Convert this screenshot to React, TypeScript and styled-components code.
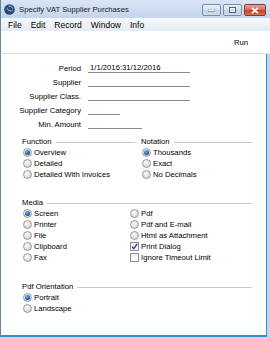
import React from 'react'
import styled, { createGlobalStyle } from 'styled-components'

const GlobalStyle = createGlobalStyle`
  html, body {
    margin: 0;
    padding: 0;
    background: #ffffff;
  }
  body {
    font-family: 'Liberation Sans', Arial, sans-serif;
    color: #000;
  }
`

const Window = styled.div`
  width: 270px;
  height: 337px;
  display: flex;
  flex-direction: column;
  box-sizing: border-box;
  overflow: hidden;
  background: #c4d6ec;
`

const TitleBar = styled.div`
  height: 18px;
  display: flex;
  align-items: center;
  padding-left: 3px;
  background: linear-gradient(#d8e5f4, #c3d5ec);
  border-left: 1px solid #6f8197;
`

const TitleText = styled.span`
  font-size: 7.7px;
  margin-left: 4px;
  color: #1b1b1b;
`

const Controls = styled.div`
  margin-left: auto;
  align-self: flex-start;
  margin-top: 4px;
  margin-right: 4px;
  display: flex;
  gap: 2px;
`

const CtlButton = styled.div<{ close?: boolean; wide?: number }>`
  width: ${p => p.wide}px;
  height: 12px;
  box-sizing: border-box;
  border: 1px solid ${p => (p.close ? '#8a3a2e' : '#7b8ea8')};
  border-radius: 2px;
  background: ${p =>
    p.close
      ? 'linear-gradient(#e9a593, #d46a52 50%, #c2412b 51%, #d86a4f)'
      : 'linear-gradient(#e8eef7, #d3dfee 50%, #c2d2e7 51%, #cfdcee)'};
  display: flex;
  align-items: center;
  justify-content: center;
`

const MenuBar = styled.div`
  height: 13px;
  display: flex;
  align-items: center;
  gap: 9px;
  padding-left: 7px;
  font-size: 8.5px;
  background: linear-gradient(#f7f9fc, #e4ebf4);
  border-left: 1px solid #6f8197;
`

const Toolbar = styled.div`
  height: 22px;
  display: flex;
  align-items: center;
  justify-content: flex-end;
  padding-right: 22px;
  font-size: 7.7px;
  background: #ffffff;
  border-left: 1px solid #6f8197;
  border-bottom: 1px solid #dcdcdc;
`

const Content = styled.div`
  flex: 1;
  background: #ffffff;
  border-left: 1px solid #6f8197;
  border-right: 1px solid #3b8fd3;
  border-bottom: 2px solid #2c8fd8;
  margin-right: 3px;
  font-size: 7.7px;
`

const Fields = styled.div`
  display: grid;
  grid-template-columns: 80px 1fr;
  column-gap: 7px;
  grid-auto-rows: 14px;
  align-items: center;
  padding-top: 7px;
`

const Label = styled.span`
  text-align: right;
  white-space: nowrap;
`

const Field = styled.div<{ w: number }>`
  width: ${p => p.w}px;
  height: 10px;
  line-height: 9px;
  padding-left: 2px;
  box-sizing: border-box;
  border-bottom: 1px solid #8a8a8a;
  white-space: nowrap;
`

const Body = styled.div`
  padding: 0 14px 0 21px;
`

const Columns = styled.div`
  display: grid;
  grid-template-columns: 113px 1fr;
  column-gap: 6px;
  margin-top: 5px;
`

const Section = styled.div<{ gapTop?: number }>`
  margin-top: ${p => p.gapTop || 0}px;
`

const Header = styled.div`
  height: 11px;
  display: flex;
  align-items: center;
  white-space: nowrap;
`

const Rule = styled.span`
  flex: 1;
  height: 0;
  border-top: 1px solid #c9c9c9;
  margin-left: 4px;
  margin-top: 1px;
`

const OptionGrid = styled.div<{ cols?: string }>`
  display: grid;
  grid-template-columns: ${p => p.cols || '1fr'};
  grid-auto-rows: 11px;
  grid-auto-flow: column;
  grid-template-rows: repeat(5, 11px);
`

const OptionList = styled.div`
  display: grid;
  grid-auto-rows: 11px;
`

const OptionRow = styled.div`
  display: flex;
  align-items: center;
  padding-left: 1px;
  white-space: nowrap;
`

const RadioDot = styled.span<{ on?: boolean }>`
  width: 9px;
  height: 9px;
  box-sizing: border-box;
  border-radius: 50%;
  border: 1px solid #9a9a9a;
  background: radial-gradient(circle at 40% 35%, #fdfdfd, #d2d2d2 80%);
  margin-right: 2px;
  flex: none;
  display: flex;
  align-items: center;
  justify-content: center;
  &::after {
    content: '';
    display: ${p => (p.on ? 'block' : 'none')};
    width: 5px;
    height: 5px;
    border-radius: 50%;
    background: radial-gradient(circle at 40% 35%, #7fb6ea, #1d5fa8 55%, #0d3a70);
  }
`

const CheckBox = styled.span`
  width: 9px;
  height: 9px;
  box-sizing: border-box;
  border: 1px solid #8e8e8e;
  background: linear-gradient(#f1f1f1, #ffffff);
  margin-right: 2px;
  flex: none;
  display: flex;
  align-items: center;
  justify-content: center;
`

type Opt = { label: string; on?: boolean; check?: boolean }

const Option = ({ label, on, check }: Opt) => (
  <OptionRow>
    {check ? (
      <CheckBox>
        {on && (
          <svg width='7' height='7' viewBox='0 0 7 7'>
            <path d='M1 3.6 L2.8 5.6 L6.2 0.8' stroke='#1c3d8f' strokeWidth='1.4' fill='none' />
          </svg>
        )}
      </CheckBox>
    ) : (
      <RadioDot on={on} />
    )}
    <span>{label}</span>
  </OptionRow>
)

const SectionHead = ({ title }: { title: string }) => (
  <Header>
    <span>{title}</span>
    <Rule />
  </Header>
)

const AppIcon = () => (
  <svg width='11' height='11' viewBox='0 0 11 11'>
    <circle cx='5.5' cy='5.5' r='5.3' fill='#28497a' />
    <path d='M2.3 3.2 C3.6 7.2 7.4 8.4 9.3 6.2 C7.4 7.2 4.6 6.6 2.3 3.2 Z' fill='#ffffff' />
    <path d='M4.5 2.2 C6.5 1.8 8.6 3 9 5' stroke='#c9d7ea' strokeWidth='0.8' fill='none' />
  </svg>
)

const App = () => {
  return (
    <>
      <GlobalStyle />
      <Window>
        <TitleBar>
          <AppIcon />
          <TitleText>Specify VAT Supplier Purchases</TitleText>
          <Controls>
            <CtlButton wide={19}>
              <svg width='7' height='3' viewBox='0 0 7 3'>
                <rect x='0' y='0' width='7' height='2.5' fill='#ffffff' stroke='#4b5f7c' strokeWidth='0.6' />
              </svg>
            </CtlButton>
            <CtlButton wide={19}>
              <svg width='7' height='6' viewBox='0 0 7 6'>
                <rect x='0.5' y='0.5' width='6' height='5' fill='none' stroke='#4b5f7c' strokeWidth='1' />
                <rect x='1.5' y='1.5' width='4' height='3' fill='none' stroke='#ffffff' strokeWidth='0.8' />
              </svg>
            </CtlButton>
            <CtlButton wide={22} close>
              <svg width='8' height='7' viewBox='0 0 8 7'>
                <path d='M1 0.8 L7 6.2 M7 0.8 L1 6.2' stroke='#ffffff' strokeWidth='1.8' />
              </svg>
            </CtlButton>
          </Controls>
        </TitleBar>
        <MenuBar>
          <span>File</span>
          <span>Edit</span>
          <span>Record</span>
          <span>Window</span>
          <span>Info</span>
        </MenuBar>
        <Toolbar>
          <span>Run</span>
        </Toolbar>
        <Content>
          <Fields>
            <Label>Period</Label>
            <Field w={102}>1/1/2016:31/12/2016</Field>
            <Label>Supplier</Label>
            <Field w={102} />
            <Label>Supplier Class.</Label>
            <Field w={102} />
            <Label>Supplier Category</Label>
            <Field w={32} />
            <Label>Min. Amount</Label>
            <Field w={54} />
          </Fields>
          <Body>
            <Columns>
              <Section>
                <SectionHead title='Function' />
                <OptionList>
                  <Option label='Overview' on />
                  <Option label='Detailed' />
                  <Option label='Detailed With Invoices' />
                </OptionList>
              </Section>
              <Section>
                <SectionHead title='Notation' />
                <OptionList>
                  <Option label='Thousands' on />
                  <Option label='Exact' />
                  <Option label='No Decimals' />
                </OptionList>
              </Section>
            </Columns>
            <Section gapTop={17}>
              <SectionHead title='Media' />
              <OptionGrid cols='107px 1fr'>
                <Option label='Screen' on />
                <Option label='Printer' />
                <Option label='File' />
                <Option label='Clipboard' />
                <Option label='Fax' />
                <Option label='Pdf' />
                <Option label='Pdf and E-mail' />
                <Option label='Html as Attachment' />
                <Option label='Print Dialog' check on />
                <Option label='Ignore Timeout Limit' check />
              </OptionGrid>
            </Section>
            <Section gapTop={18}>
              <SectionHead title='Pdf Orientation' />
              <OptionList>
                <Option label='Portrait' on />
                <Option label='Landscape' />
              </OptionList>
            </Section>
          </Body>
        </Content>
      </Window>
    </>
  )
}

export default App
